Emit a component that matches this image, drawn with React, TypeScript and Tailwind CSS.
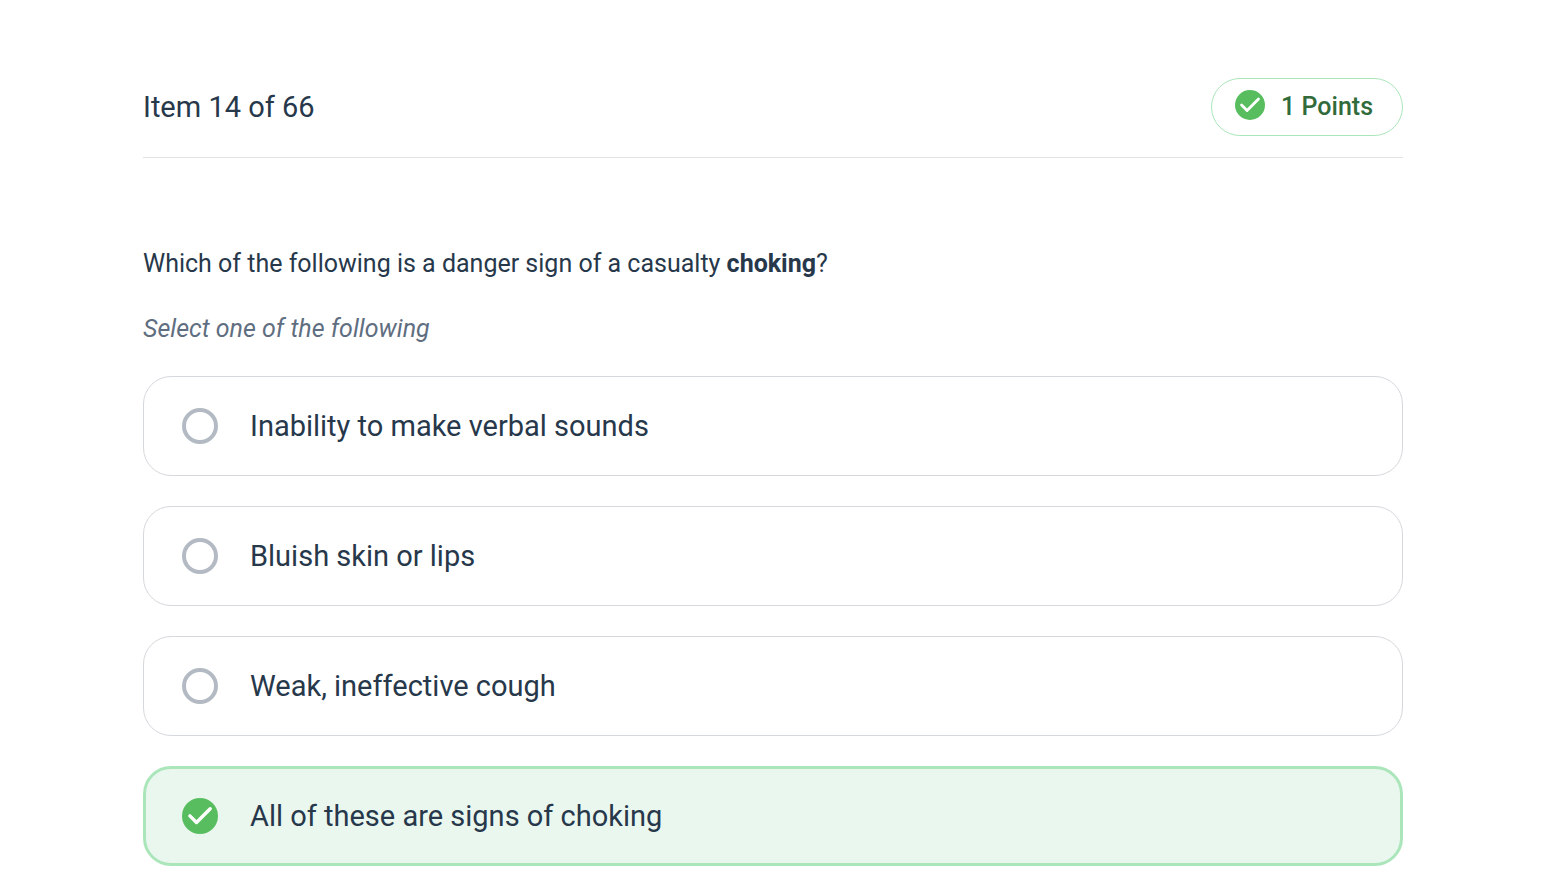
import React, { useState } from 'react';

interface Option {
  id: string;
  label: string;
}

const options: Option[] = [
  { id: 'sounds', label: 'Inability to make verbal sounds' },
  { id: 'skin', label: 'Bluish skin or lips' },
  { id: 'cough', label: 'Weak, ineffective cough' },
  { id: 'all', label: 'All of these are signs of choking' },
];

const CheckBadge = ({ className }: { className: string }) => (
  <svg viewBox="0 0 36 36" className={className} aria-hidden="true">
    <circle cx="18" cy="18" r="18" fill="#58bd5f" />
    <path
      d="M7.9 17.9 L14.5 24.5 L28.2 10.8"
      fill="none"
      stroke="#fff"
      strokeWidth="3.4"
      strokeLinecap="round"
      strokeLinejoin="round"
    />
  </svg>
);

const OptionRow = ({
  option,
  checked,
  onSelect,
}: {
  option: Option;
  checked: boolean;
  onSelect: (id: string) => void;
}) => (
  <label
    htmlFor={option.id}
    className={`flex min-h-[100px] items-center gap-8 rounded-[28px] cursor-pointer ${
      checked ? 'border-3 border-[#abe6bb] bg-[#eaf7ef] px-9' : 'border border-[#d5d8dc] bg-white px-[38px]'
    }`}
  >
    <span className="grid size-9 shrink-0">
      <input
        type="radio"
        id={option.id}
        name="answer"
        checked={checked}
        onChange={() => onSelect(option.id)}
        className={`col-start-1 row-start-1 size-9 appearance-none rounded-full cursor-pointer ${
          checked ? '' : 'border-4 border-[#b3bac3]'
        }`}
      />
      {checked && <CheckBadge className="col-start-1 row-start-1 size-9 pointer-events-none" />}
    </span>
    <span className="text-[29px] leading-9">{option.label}</span>
  </label>
);

export default function App() {
  const [answer, setAnswer] = useState('all');

  return (
    <main className="bg-white pt-[78px] pr-[141px] pb-5 pl-[143px] font-['Roboto',sans-serif] text-[#27384b]">
      <header className="flex items-center justify-between border-b border-[#e2e3e5] pb-[21px]">
        <h1 className="text-[29px] leading-9">Item 14 of 66</h1>
        <div className="flex h-[58px] items-center gap-4 rounded-full border border-[#abe6bb] pr-[29px] pl-[23px]">
          <CheckBadge className="mb-1 size-[30px]" />
          <span className="text-[25px] leading-8 font-medium text-[#316a3b]">1 Points</span>
        </div>
      </header>

      <form className="pt-[90px]">
        <p className="text-[25px] leading-8">
          Which of the following is a danger sign of a casualty <strong>choking</strong>?
        </p>
        <p className="mt-[33px] text-[25px] leading-8 text-[#5f6e80] italic">Select one of the following</p>

        <div className="mt-[31px] flex flex-col gap-[30px]" role="radiogroup" aria-label="Answers">
          {options.map((option) => (
            <OptionRow key={option.id} option={option} checked={answer === option.id} onSelect={setAnswer} />
          ))}
        </div>
      </form>
    </main>
  );
}
